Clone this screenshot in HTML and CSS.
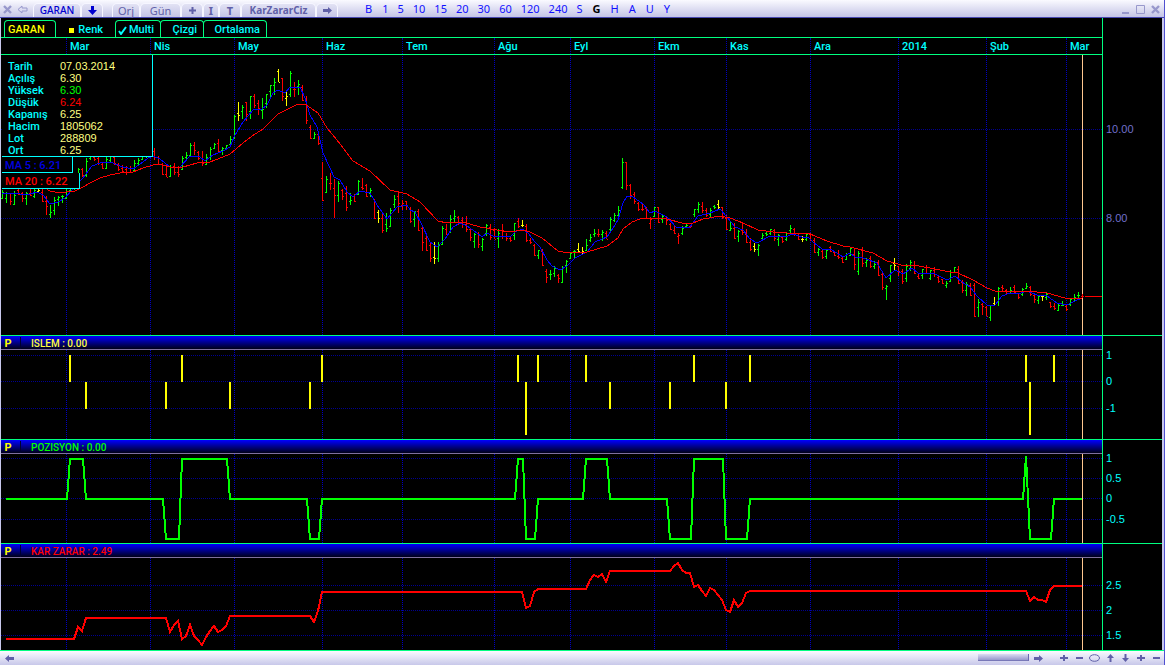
FILE: index.html
```
<!DOCTYPE html>
<html lang="tr">
<head>
<meta charset="UTF-8">
    <title>GARAN - KarZararCiz</title>
    <link rel="stylesheet" href="styles.css">
</head>
<body>
    <header class="topbar">
        <button class="icon-btn pale" aria-label="Kapat"><svg width="9" height="9" viewBox="0 0 9 9"><path d="M1 1L8 8M8 1L1 8" stroke-width="2.4"/></svg></button>
        <button class="icon-btn pale" aria-label="Geri"><svg width="11" height="9" viewBox="0 0 11 9"><path d="M5 1L1 4.500L5 8V6H10V3H5Z" stroke-width="1"/></svg></button>
        <div class="tabs">
            <button class="tab symbol">GARAN</button>
            <button class="tab symbol drop" aria-label="Sembol seç"><svg width="9" height="9" viewBox="0 0 9 9"><path class="fill" d="M3 0H6V4H9L4.500 9L0 4H3Z"/></svg></button>
        </div>
        <div class="tabs">
            <button class="tab">Orj</button>
            <button class="tab wide">Gün</button>
            <button class="tab" aria-label="Ekle"><svg width="7" height="7" viewBox="0 0 7 7"><path d="M3.500 0V7M0 3.500H7" stroke-width="2"/></svg></button>
            <button class="tab bold slim">I</button>
            <button class="tab bold">T</button>
            <button class="tab formula">KarZararCiz</button>
            <button class="tab" aria-label="İleri"><svg width="9" height="7" viewBox="0 0 9 7"><path class="fill" d="M0 2H5V0L9 3.500L5 7V5H0Z"/></svg></button>
        </div>
        <nav class="periods">
            <button>B</button><button class="num">1</button><button class="num">5</button><button class="num">10</button><button class="num">15</button><button class="num">20</button><button class="num">30</button><button class="num">60</button><button class="num">120</button><button class="num">240</button><button>S</button><button class="active">G</button><button>H</button><button>A</button><button>U</button><button>Y</button>
        </nav>
        <div class="window-btns">
            <button class="icon-btn pale" aria-label="Küçült"><svg width="9" height="9" viewBox="0 0 9 9"><path d="M1 8H8" stroke-width="2"/></svg></button>
            <button class="icon-btn pale" aria-label="Büyüt"><svg width="9" height="9" viewBox="0 0 9 9"><path d="M.5 .5H8.500V8.500H.5Z" stroke-width="1"/></svg></button>
            <button class="icon-btn pale" aria-label="Pencereyi kapat"><svg width="9" height="9" viewBox="0 0 9 9"><path d="M1 1L8 8M8 1L1 8" stroke-width="2.4"/></svg></button>
        </div>
    </header>

    <main>
        <div class="tools">
            <button class="tool current">GARAN</button>
            <button class="tool plain"><i class="swatch"></i>Renk</button>
            <button class="tool multi"><svg width="9" height="9" viewBox="0 0 9 9"><path d="M1 5L3 8L8 1" stroke-width="2"/></svg>Multi</button>
            <button class="tool">Çizgi</button>
            <button class="tool average">Ortalama</button>
        </div>
        <div class="months">
            <span></span><span>Mar</span><span>Nis</span><span>May</span><span>Haz</span><span>Tem</span><span>Ağu</span><span>Eyl</span><span>Ekm</span><span>Kas</span><span>Ara</span><span>2014</span><span>Şub</span><span>Mar</span>
        </div>

        <section class="pane price">
            <svg class="plot" id="price" viewBox="1 55 1101 280" preserveAspectRatio="none"></svg>
            <div class="side"><svg class="axis" id="priceAxis"></svg></div>
            <div class="info">
                <dl class="quote">
                    <dt>Tarih</dt><dd>07.03.2014</dd>
                    <dt>Açılış</dt><dd>6.30</dd>
                    <dt>Yüksek</dt><dd class="up">6.30</dd>
                    <dt>Düşük</dt><dd class="down">6.24</dd>
                    <dt>Kapanış</dt><dd>6.25</dd>
                    <dt>Hacim</dt><dd>1805062</dd>
                    <dt>Lot</dt><dd>288809</dd>
                    <dt>Ort</dt><dd>6.25</dd>
                </dl>
                <div class="ma ma5">MA 5 : 6.21</div>
                <div class="ma ma20">MA 20 : 6.22</div>
            </div>
        </section>

        <section class="pane sub">
            <div class="title"><button>P</button><span class="yellow">ISLEM : 0.00</span></div>
            <svg class="plot" id="islem" viewBox="1 350 1101 89" preserveAspectRatio="none"></svg>
            <div class="side"><svg class="axis" id="islemAxis"></svg></div>
        </section>

        <section class="pane sub">
            <div class="title"><button>P</button><span class="green">POZISYON : 0.00</span></div>
            <svg class="plot" id="pozisyon" viewBox="1 454 1101 89" preserveAspectRatio="none"></svg>
            <div class="side"><svg class="axis" id="pozisyonAxis"></svg></div>
        </section>

        <section class="pane sub">
            <div class="title"><button>P</button><span class="red">KAR ZARAR : 2.49</span></div>
            <svg class="plot" id="kar" viewBox="1 558 1101 92" preserveAspectRatio="none"></svg>
            <div class="side"><svg class="axis" id="karAxis"></svg></div>
        </section>
    </main>

    <footer class="bottombar">
        <button class="icon-btn" aria-label="Sola kaydır"><svg width="9" height="7" viewBox="0 0 9 7"><path class="fill" d="M9 2H4V0L0 3.500L4 7V5H9Z"/></svg></button>
        <div class="track"><div class="thumb"></div></div>
        <button class="icon-btn scroll-right" aria-label="Sağa kaydır"><svg width="9" height="7" viewBox="0 0 9 7"><path class="fill" d="M0 2H5V0L9 3.500L5 7V5H0Z"/></svg></button>
        <button class="icon-btn" aria-label="Genişlet"><svg width="8" height="8" viewBox="0 0 8 8"><path d="M4 1V7M0 4H8" stroke-width="2"/></svg></button>
        <button class="icon-btn" aria-label="Daralt"><svg width="8" height="8" viewBox="0 0 8 8"><path d="M1 4H8" stroke-width="2"/></svg></button>
        <button class="icon-btn fit" aria-label="Sığdır"><svg width="11" height="8" viewBox="0 0 11 8"><ellipse cx="5.500" cy="4" rx="5" ry="3.300"/></svg></button>
        <button class="icon-btn" aria-label="Yukarı"><svg width="7" height="8" viewBox="0 0 7 8"><path class="fill" d="M2.500 8V4H0L3.500 0L7 4H4.500V8Z"/></svg></button>
        <button class="icon-btn" aria-label="Aşağı"><svg width="7" height="8" viewBox="0 0 7 8"><path class="fill" d="M2.500 0V4H0L3.500 8L7 4H4.500V0Z"/></svg></button>
        <button class="icon-btn" aria-label="Yakınlaştır"><svg width="8" height="8" viewBox="0 0 8 8"><path d="M4 1V7M0 4H8" stroke-width="2"/></svg></button>
        <button class="icon-btn" aria-label="Uzaklaştır"><svg width="8" height="8" viewBox="0 0 8 8"><path d="M1 4H8" stroke-width="2"/></svg></button>
    </footer>
    <script src="chart.js"></script>
</body>
</html>
```
FILE: styles.css
```
body, dl, dt, dd {padding: 0; margin: 0;}

* {
    box-sizing: border-box;
}

body {
    display: flex;
    flex-direction: column;
    height: 100vh;
    overflow: hidden;
    border-right: 1px solid #5050d0;
    background: #000;
    font: 500 11px/12px Roboto, "Liberation Sans", sans-serif;
}

button {
    border: 0;
    padding: 0;
    background: none;
    color: inherit;
    font: inherit;
    cursor: pointer;
}

svg {
    fill: none;
    stroke: currentColor;
}

.fill {
    fill: currentColor;
    stroke: none;
}

/* top bar */
.topbar {
    display: flex;
    align-items: flex-end;
    flex: none;
    height: 18px;
    border-bottom: 1px solid #4848b0;
    background: linear-gradient(#fafaff, #c4c4e6);
    color: #6060a8;
    font: 11px/13px "Noto Sans", sans-serif;
}

.icon-btn {
    display: flex;
    align-items: center;
    justify-content: center;
    flex: none;
    width: 15px;
    height: 14px;
    color: #6060a8;
}

.pale {
    color: #9898cc;
}

.topbar .icon-btn {
    height: 16px;
}

.tabs {
    display: flex;
    margin-left: 3px;
}

.tabs + .tabs {
    margin-left: 9px;
}

.tab {
    display: flex;
    align-items: center;
    justify-content: center;
    width: 22px;
    height: 14px;
    border: 1px solid #f6f6ff;
    border-bottom: 0;
    border-radius: 5px 5px 0 0;
    background: linear-gradient(#e2e2f4, #c4c4e6);
}

.tab:nth-child(1) {
    width: 28px;
}

.tab.wide {
    width: 41px;
}

.tab.slim {
    width: 16px;
}

.tab.formula {
    width: 75px;
    font-size: 10px;
    font-weight: bold;
}

.tab.symbol {
    width: 48px;
    color: #0000d0;
    font-size: 10px;
    font-weight: 500;
}

.tab.drop {
    width: 22px;
}

.bold {
    font-weight: bold;
}

.periods {
    display: flex;
    margin-left: 22px;
    color: #1010ff;
}

.periods button {
    padding: 0 5px 1px;
    height: 16px;
}

.periods .num {
    padding-right: 4px;
}

.periods .active {
    color: #000;
    font-weight: bold;
}

.window-btns {
    display: flex;
    margin-left: auto;
    padding-right: 1px;
}

/* chart area */
main {
    display: grid;
    flex: 1;
    grid-template-rows: 20px 17px minmax(0, 280fr) minmax(0, 104fr) minmax(0, 104fr) minmax(0, 107fr);
    min-height: 0;
    border-left: 1px solid #c8c8ec;
    border-right: 2px solid #c8c8ec;
}

.tools, .months {
    margin-right: 59px;
    border-right: 1px solid #00ff80;
    border-bottom: 1px solid #00ff80;
    color: #00ffff;
}

.tools {
    display: flex;
    align-items: flex-end;
    padding-left: 3px;
}

.tool {
    display: flex;
    align-items: center;
    justify-content: flex-end;
    gap: 2px;
    width: 44px;
    height: 17px;
    margin-right: -1px;
    padding: 2px 6px 0 0;
    border: 1px solid #00ff80;
    border-bottom: 0;
    border-radius: 4px 4px 0 0;
}

.tool.current {
    justify-content: flex-start;
    width: 52px;
    padding-left: 3px;
    color: #ffff00;
}

.tool.plain {
    width: 61px;
    padding-right: 12px;
    border-color: transparent;
}

.tool.multi {
    width: 46px;
}

.tool.average {
    width: 64px;
}

.swatch {
    width: 5px;
    height: 5px;
    margin-right: 2px;
    background: #ffff00;
}

.months {
    display: grid;
    grid-template-columns: 65fr 84fr 84fr 88fr 80fr 92fr 76fr 84fr 72fr 84fr 88fr 88fr 80fr 36fr;
    line-height: 14px;
}

.months span {
    padding: 2px 0 0 3px;
    border-left: 1px dotted #0000b0;
}

.months span:first-child {
    border-left: 0;
}

.pane {
    display: grid;
    position: relative;
    grid-template-columns: minmax(0, 1fr) 60px;
    grid-template-rows: minmax(0, 1fr);
}

.sub {
    grid-template-rows: 14px minmax(0, 1fr);
    border-top: 1px solid #00ff80;
}

.plot, .axis {
    display: block;
    width: 100%;
    height: 100%;
}

.plot {
    shape-rendering: crispEdges;
}

.side {
    border-left: 1px solid #00ff80;
}

.sub .side {
    grid-row: 1 / 3;
    grid-column: 2;
    padding-top: 14px;
    min-height: 0;
}

.axis {
    overflow: visible;
}

.axis text {
    fill: #00ffff;
    stroke: none;
    font: 11px "Liberation Sans", Arial, sans-serif;
    dominant-baseline: central;
}

.price .axis text {
    fill: #7070cc;
}

.title {
    display: flex;
    padding-top: 1px;
    border-bottom: 1px solid #8070a0;
    background: linear-gradient(#0000ff, #000018);
    font: 500 10px/14px Roboto, "Liberation Sans", sans-serif;
}

.title button {
    width: 20px;
    margin-right: 10px;
    padding-right: 5px;
    border-right: 1px solid #000030;
    color: #ffff00;
    font-size: 11px;
    font-weight: bold;
}

.yellow { color: #ffff40; }
.green { color: #00ff00; }
.red { color: #ff0000; }

/* quote box over the price plot */
.info {
    position: absolute;
    top: 0;
    left: 1px;
    display: flex;
    flex-direction: column;
    align-items: flex-start;
}

.quote {
    display: grid;
    grid-template-columns: 52px 92px;
    padding: 5px 0 0 6px;
    border-right: 1px solid #00ffff;
    border-bottom: 1px solid #00ffff;
    background: #000;
    color: #00ffff;
}

.quote dt {
    padding-top: 2px;
    line-height: 10px;
}

.quote dd {
    color: #ffff80;
    font: 11px/12px "Liberation Sans", Arial, sans-serif;
}

.quote .up { color: #00ff00; }
.quote .down { color: #ff0000; }

.ma {
    height: 16px;
    width: 71px;
    padding: 2px 0 0 3px;
    border-right: 1px solid #00ffff;
    border-bottom: 1px solid #00ffff;
    background: #000;
    color: #0000e0;
    line-height: 14px;
    white-space: nowrap;
}

.ma20 {
    width: 78px;
    color: #ff0000;
}

/* plot lines */
.grid-v { stroke: #0000c0; stroke-dasharray: 1 1; }
.grid-h { stroke: #000090; stroke-dasharray: 1 1; }
.cursor { stroke: #ffc890; }
.bar-g { stroke: #00ff00; }
.bar-r { stroke: #ff0000; }
.bar-y { stroke: #ffff00; }
.line-ma5 { stroke: #0000ff; }
.line-ma20 { stroke: #ff0000; }
.line-islem { stroke: #ffff00; stroke-width: 2; }
.line-pozisyon { stroke: #00ff00; stroke-width: 2; }
.line-kar { stroke: #ff0000; stroke-width: 2; }

/* bottom bar */
.bottombar {
    display: flex;
    flex: none;
    height: 15px;
    padding: 0 1px 0 2px;
    border-top: 1px solid #00ff80;
    background: linear-gradient(#fafaff, #c8c8ea);
}

.track {
    display: flex;
    flex: 1;
    justify-content: flex-end;
    padding: 3px 2px 4px 0;
}

.thumb {
    width: 51px;
    border-right: 1px solid #6868b0;
    border-bottom: 1px solid #7878b8;
    background: linear-gradient(#dcdcf2, #9898cc);
}

.scroll-right {
    margin-right: 10px;
}

.fit {
    width: 17px;
}
```
FILE: chart.js
```
var NS = 'http://www.w3.org/2000/svg';

// month starts
var months = [66, 150, 234, 322, 402, 494, 570, 654, 726, 810, 898, 986, 1066];

// colour, high, low, open, close - one bar every 4 units
var bars = 'g190 199 198 192,g192 203 198 193,r193 205 193 201,g191 205 204 195,r189 195 190 194,r192 202 193 198,g192 205 198 193,r189 196 193 195,g188 198 196 190,y188 192 191 190,' +
    'r189 202 192 201,r196 215 201 206,g205 218 214 212,g197 215 210 200,g196 206 199 197,g195 203 196 196,g186 199 198 188,g180 192 190 183,g176 190 188 180,g168 180 178 169,' +
    'r168 177 169 175,g158 177 175 161,g152 160 158 154,r156 161 157 159,r157 165 158 163,r162 169 164 168,g157 169 168 159,g154 163 160 156,r156 165 157 163,r163 171 165 169,' +
    'r165 173 168 171,r166 175 169 172,r166 173 168 172,g160 171 170 163,g158 166 163 160,g154 160 159 156,g152 158 156 154,r148 157 150 155,r148 160 151 157,r156 165 157 164,' +
    'r163 175 164 174,r165 177 174 177,g165 177 176 167,r163 175 166 172,r166 177 172 174,g156 170 169 158,g152 160 157 155,g143 156 155 145,r142 155 145 150,r151 160 152 158,' +
    'r151 166 158 163,g154 165 164 157,g147 160 157 149,g143 149 148 144,r139 152 143 151,g147 155 150 148,g145 149 148 145,g136 147 144 139,g115 139 137 116,y102 121 113 115,' +
    'g105 119 111 107,r102 121 102 114,g96 119 111 96,r94 108 96 105,r100 115 103 108,g98 119 110 109,g94 108 103 94,g85 97 91 85,g78 95 85 82,y69 82 71 82,' +
    'r78 101 78 96,y91 106 98 96,g71 97 94 73,r82 97 89 89,g80 95 86 84,r85 101 87 100,r96 124 100 120,r125 139 127 138,g132 139 138 134,r131 145 134 143,' +
    'r162 201 178 200,g176 193 192 179,r173 190 183 183,r179 218 188 195,g181 202 195 183,r189 200 190 196,r186 211 193 207,g193 205 201 200,r194 202 196 201,g180 195 194 181,' +
    'r178 190 187 188,r184 197 185 196,g188 197 193 190,r199 219 199 218,y210 223 212 218,r213 233 218 230,g213 232 224 228,g208 227 226 210,g195 208 204 199,r193 213 196 203,' +
    'r200 210 205 203,r201 210 201 205,r207 223 208 221,g212 227 219 211,r209 231 211 230,r227 251 228 242,r235 251 238 250,r242 262 245 258,y242 264 257 258,g242 262 258 245,' +
    'g226 245 244 228,r224 235 229 234,g215 233 231 219,g210 222 218 216,r216 225 217 223,r217 228 220 222,r216 232 224 229,r228 241 229 237,g233 248 241 234,r232 248 233 244,' +
    'g238 251 246 239,g224 236 233 225,r224 240 227 237,r228 239 230 239,g229 248 238 233,r224 239 230 236,r233 241 236 238,r236 242 238 240,g223 240 235 223,r218 228 221 226,' +
    'y220 227 225 225,r224 242 226 240,r238 244 240 242,r244 256 245 255,g250 259 255 250,r249 266 251 265,r269 283 271 277,g270 280 274 274,g266 277 273 268,r274 283 275 278,' +
    'g266 283 282 267,g260 273 265 261,g252 259 258 253,g250 258 251 251,y243 252 249 251,y247 254 252 251,g239 251 250 245,g234 242 240 237,g229 237 234 233,r229 237 234 234,' +
    'g230 241 234 232,r231 239 233 239,g217 231 229 219,g213 222 220 215,g206 216 215 210,g158 189 187 162,r162 190 162 185,r184 199 185 195,r192 204 194 201,r202 211 203 209,' +
    'r203 211 209 209,r207 219 208 218,r217 229 223 219,g207 217 216 207,r207 223 207 222,g215 223 219 216,r217 225 218 220,r223 230 224 229,r226 234 230 233,r233 244 236 235,' +
    'g226 235 233 228,g224 227 226 225,r225 228 226 226,g209 217 214 209,g202 213 209 204,r202 213 206 210,r208 217 210 215,g208 218 214 210,g205 209 206 207,y200 209 204 207,' +
    'r207 219 207 217,r215 230 218 229,g222 231 230 228,r223 239 228 238,g230 242 236 231,r223 235 230 232,r229 243 234 242,r238 251 242 249,y243 252 246 249,g244 256 249 245,' +
    'g233 240 238 235,g232 236 233 234,g229 235 233 229,r229 241 230 238,g234 246 239 235,r236 243 237 241,g233 241 239 236,g225 233 230 228,r228 236 229 234,r234 240 235 239,' +
    'y236 242 239 239,g233 241 239 234,r233 241 234 240,r238 253 240 252,g248 256 252 249,r250 259 251 257,g250 259 256 250,r246 252 247 251,r251 256 252 255,r250 259 256 257,' +
    'r257 263 258 262,g253 260 259 254,g248 256 255 248,r249 270 254 264,g251 275 271 253,r247 267 250 263,g258 267 262 260,r256 268 258 266,g261 269 266 264,r260 276 262 275,' +
    'r272 290 274 287,g285 300 288 286,g265 282 278 265,y258 270 263 265,r266 276 266 271,r269 284 271 281,g264 282 278 266,g260 271 268 262,r261 274 265 273,r273 279 276 278,' +
    'g269 279 275 269,r265 274 267 273,g270 280 278 270,r267 277 270 274,r275 283 277 281,r279 284 279 283,g281 288 285 283,g270 282 281 272,g267 273 272 267,r266 284 269 283,' +
    'r280 293 282 290,g282 296 290 284,r283 296 285 295,r283 317 285 316,g299 317 307 302,r303 315 304 306,r306 316 307 316,g305 321 317 305,y297 305 303 304,g287 306 302 288,' +
    'r285 292 287 288,r289 294 290 293,g287 294 293 290,r285 293 287 292,r293 299 293 297,g288 296 294 289,g283 289 288 286,r286 296 287 294,r295 303 295 299,g296 304 300 296,' +
    'y296 301 296 296,g293 300 297 294,r302 308 302 306,r303 310 306 308,g303 311 310 305,g301 306 305 305,r305 311 306 309,g298 306 304 299,g294 301 298 297,g292 298 295 295,r294 298 296 296';

var ma5 = '2,193 7,193 20,194 30,194 37,192 43,195 50,204 58,202 65,198 72,190 83,178 92,166 100,163 110,162 123,167 133,169 143,162 148,158 153,156 160,159 170,167 180,167 190,156 200,157 205,161 213,155 223,151 230,147 ' +
    '234,137 243,122 253,110 262,109 267,105 273,93 278,90 285,93 290,87 300,87 305,98 310,115 317,127 320,140 323,153 330,168 334,177 340,180 347,192 353,197 360,191 370,193 377,205 387,219 397,207 407,205 410,210 415,212 ' +
    '422,225 430,242 437,247 445,239 453,227 460,223 467,226 477,233 482,237 487,233 493,236 510,237 515,232 522,229 528,233 535,242 540,247 547,260 552,266 560,270 567,266 575,258 587,252 595,242 607,237 613,228 618,220 ' +
    '623,203 627,196 633,197 643,204 650,213 655,211 667,217 677,228 690,227 698,216 710,213 720,209 727,217 735,227 743,230 750,239 757,243 770,236 785,237 793,234 802,237 808,237 813,242 822,249 832,250 843,257 850,253 ' +
    '855,257 863,258 877,263 886,278 895,270 903,274 912,268 918,273 933,273 947,280 955,276 962,282 970,287 977,296 988,306 995,305 1002,296 1010,293 1018,294 1027,291 1037,295 1047,296 1057,303 1067,305 1077,300 1082,298';

var ma20 = '45,188 50,191 55,192 66,192 75,191 83,187 92,182 100,178 110,175 120,173 133,172 143,168 153,165 158,164 170,167 183,167 197,163 210,162 223,157 230,154 243,143 252,136 263,129 278,114 290,108 298,104 305,104 ' +
    '318,113 327,128 337,140 353,161 370,171 390,190 407,194 420,202 438,221 447,223 463,222 480,227 497,230 510,232 522,230 530,232 542,238 558,251 568,253 587,252 607,246 618,238 623,229 632,222 640,219 653,218 667,219 ' +
    '682,223 693,223 703,219 720,216 730,218 743,223 758,230 773,232 787,233 810,234 827,241 843,246 850,247 873,253 887,261 905,266 913,265 930,268 950,272 958,273 973,280 987,288 995,291 1027,291 1047,293 1065,298 1082,298';

// trades: x, direction * lots
var trades = [[70, 1], [86, -1], [166, -1], [182, 1], [230, -1], [310, -1], [322, 1], [518, 1], [526, -2], [538, 1],
    [586, 1], [610, -1], [670, -1], [694, 1], [726, -1], [750, 1], [1026, 1], [1030, -2], [1054, 1]];

var pozisyon = '6,499 67,499 70,459 83,459 86,499 163,499 166,539 179,539 182,459 227,459 230,499 307,499 310,539 319,539 322,499 515,499 518,459 523,459 526,539 535,539 538,499 583,499 586,459 607,459 610,499 ' +
    '667,499 670,539 691,539 694,459 723,459 726,539 747,539 750,499 1023,499 1026,456 1030,539 1051,539 1054,499 1082,499';

var kar = '6,639 74,639 78,627 82,631 86,618 166,618 170,632 174,625 178,621 182,639 186,636 190,625 194,636 198,640 202,645 206,637 210,631 214,626 218,632 222,630 226,626 230,616 310,616 314,622 318,611 322,592 ' +
    '522,592 526,608 530,606 534,592 538,589 586,589 590,580 594,575 598,577 602,574 606,582 610,571 670,571 674,566 678,563 682,570 686,573 690,573 694,587 698,585 702,591 706,596 710,588 714,590 718,595 722,600 ' +
    '726,610 730,612 734,600 738,607 742,603 746,593 750,591 1026,591 1030,601 1034,597 1038,600 1042,600 1046,602 1050,590 1054,586 1082,586';

function add(parent, name, attrs) {
    var el = document.createElementNS(NS, name);
    for (var key in attrs) {
        el.setAttribute(key, attrs[key]);
    }
    parent.appendChild(el);
    return el;
}

function drawGrid(id, top, height, levels) {
    var plot = document.getElementById(id);
    var axis = document.getElementById(id + 'Axis');
    levels.forEach(function (level) {
        add(plot, 'path', {'class': 'grid-h', d: 'M1 ' + (level[1] + 0.5) + 'H1102'});
        add(axis, 'text', {x: 3, y: (level[1] - 0.5 - top) / height * 100 + '%'}).textContent = level[0];
    });
    // dots start on an even row so they line up between panes
    var start = top + top % 2;
    months.forEach(function (x) {
        add(plot, 'path', {'class': 'grid-v', d: 'M' + (x + 0.5) + ' ' + start + 'V' + (top + height)});
    });
    return plot;
}

function drawCursor(plot, top, height) {
    add(plot, 'path', {'class': 'cursor', d: 'M1082.5 ' + top + 'v' + height});
}

// price
var plot = drawGrid('price', 55, 280, [['10.00', 129], ['8.00', 218]]);
var paths = {g: '', r: '', y: ''};
bars.split(',').forEach(function (bar, i) {
    var v = bar.slice(1).split(' ').map(Number);
    var x = 2 + i * 4;
    paths[bar.charAt(0)] += 'M' + (x + 0.5) + ' ' + v[0] + 'V' + v[1] +
        'M' + (x - 1) + ' ' + (v[2] + 0.5) + 'h1' +
        'M' + (x + 1) + ' ' + (v[3] + 0.5) + 'h1';
});
drawCursor(plot, 55, 280);
for (var c in paths) {
    add(plot, 'path', {'class': 'bar-' + c, d: paths[c]});
}
add(plot, 'polyline', {'class': 'line-ma5', points: ma5});
add(plot, 'polyline', {'class': 'line-ma20', points: ma20});
add(plot, 'path', {'class': 'line-ma20', d: 'M1085 296.5H1102'});

// ISLEM
plot = drawGrid('islem', 350, 89, [['1', 355], ['0', 381], ['-1', 408]]);
drawCursor(plot, 350, 89);
add(plot, 'path', {
    'class': 'line-islem',
    d: trades.map(function (t) {
        return 'M' + t[0] + ' 382v' + (t[1] > 0 ? -27 : -26.5 * t[1]);
    }).join('')
});

// POZISYON
plot = drawGrid('pozisyon', 454, 89, [['1', 458], ['0.5', 478], ['0', 498], ['-0.5', 519]]);
drawCursor(plot, 454, 89);
add(plot, 'polyline', {'class': 'line-pozisyon', points: pozisyon});

// KAR ZARAR
plot = drawGrid('kar', 558, 92, [['2.5', 585], ['2', 610], ['1.5', 635]]);
drawCursor(plot, 558, 92);
add(plot, 'polyline', {'class': 'line-kar', points: kar});
```
